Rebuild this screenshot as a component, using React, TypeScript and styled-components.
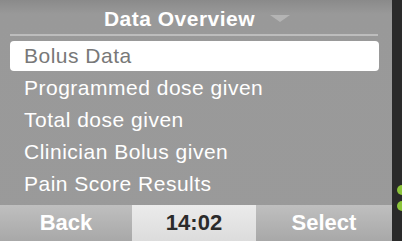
import React from 'react'
import styled, { createGlobalStyle } from 'styled-components'

const GlobalStyle = createGlobalStyle`
  html, body {
    margin: 0;
    padding: 0;
    background: #2a2a2a;
  }
  body {
    font-family: 'Liberation Sans', Arial, sans-serif;
  }
`

const Device = styled.div`
  display: flex;
  width: 402px;
  height: 241px;
  overflow: hidden;
`

const Screen = styled.div`
  display: flex;
  flex-direction: column;
  width: 392px;
  height: 241px;
  background: linear-gradient(to bottom, #8a8a8a 0px, #999999 14px, #9a9a9a 100%);
`

const Header = styled.div`
  display: flex;
  align-items: center;
  justify-content: center;
  gap: 15px;
  height: 36px;
  margin: 0 14px 0 10px;
  padding-left: 6px;
  border-bottom: 2px solid #bdbdbd;
  box-sizing: border-box;
`

const Title = styled.span`
  color: #ffffff;
  font-size: 21px;
  font-weight: 700;
  letter-spacing: 0.5px;
  line-height: 1;
  padding-top: 3px;
`

const Caret = styled.svg`
  width: 20px;
  height: 7px;
  margin-top: 2px;
`

const List = styled.div`
  display: flex;
  flex-direction: column;
  gap: 2px;
  padding: 5px 13px 0 10px;
  flex: 1;
`

const Row = styled.div<{ $selected?: boolean }>`
  display: flex;
  align-items: center;
  height: 30px;
  padding-left: 14px;
  border-radius: 4px;
  background: ${({ $selected }) => ($selected ? '#ffffff' : 'transparent')};
  color: ${({ $selected }) => ($selected ? '#787878' : '#ffffff')};
  font-size: 21px;
  letter-spacing: 0.5px;
  white-space: nowrap;
`

const Footer = styled.div`
  display: flex;
  height: 36px;
`

const FooterButton = styled.div<{ $clock?: boolean; $width: number }>`
  display: flex;
  align-items: center;
  justify-content: center;
  width: ${({ $width }) => $width}px;
  background: ${({ $clock }) =>
    $clock
      ? 'linear-gradient(to bottom, #ebebeb, #dcdcdc)'
      : 'linear-gradient(to bottom, #bfbfbf, #a8a8a8)'};
  color: ${({ $clock }) => ($clock ? '#2b2b2b' : '#ffffff')};
  font-size: 22px;
  font-weight: 700;
`

const SideStrip = styled.div`
  display: flex;
  flex-direction: column;
  gap: 6px;
  width: 10px;
  padding-top: 185px;
  background: #2a2a2a;
  overflow: hidden;
`

const Led = styled.span`
  flex-shrink: 0;
  width: 10px;
  height: 10px;
  margin-left: 5px;
  border-radius: 50%;
  background: #8cc43a;
`

const items = [
  'Bolus Data',
  'Programmed dose given',
  'Total dose given',
  'Clinician Bolus given',
  'Pain Score Results',
]

export default function App() {
  return (
    <>
      <GlobalStyle />
      <Device>
        <Screen>
          <Header>
            <Title>Data Overview</Title>
            <Caret viewBox="0 0 20 7">
              <polygon points="0,0 20,0 10,7" fill="#b4b4b4" />
            </Caret>
          </Header>
          <List>
            {items.map((item, i) => (
              <Row key={item} $selected={i === 0}>
                {item}
              </Row>
            ))}
          </List>
          <Footer>
            <FooterButton $width={132}>Back</FooterButton>
            <FooterButton $width={124} $clock>
              14:02
            </FooterButton>
            <FooterButton $width={136}>Select</FooterButton>
          </Footer>
        </Screen>
        <SideStrip>
          <Led />
          <Led />
        </SideStrip>
      </Device>
    </>
  )
}
